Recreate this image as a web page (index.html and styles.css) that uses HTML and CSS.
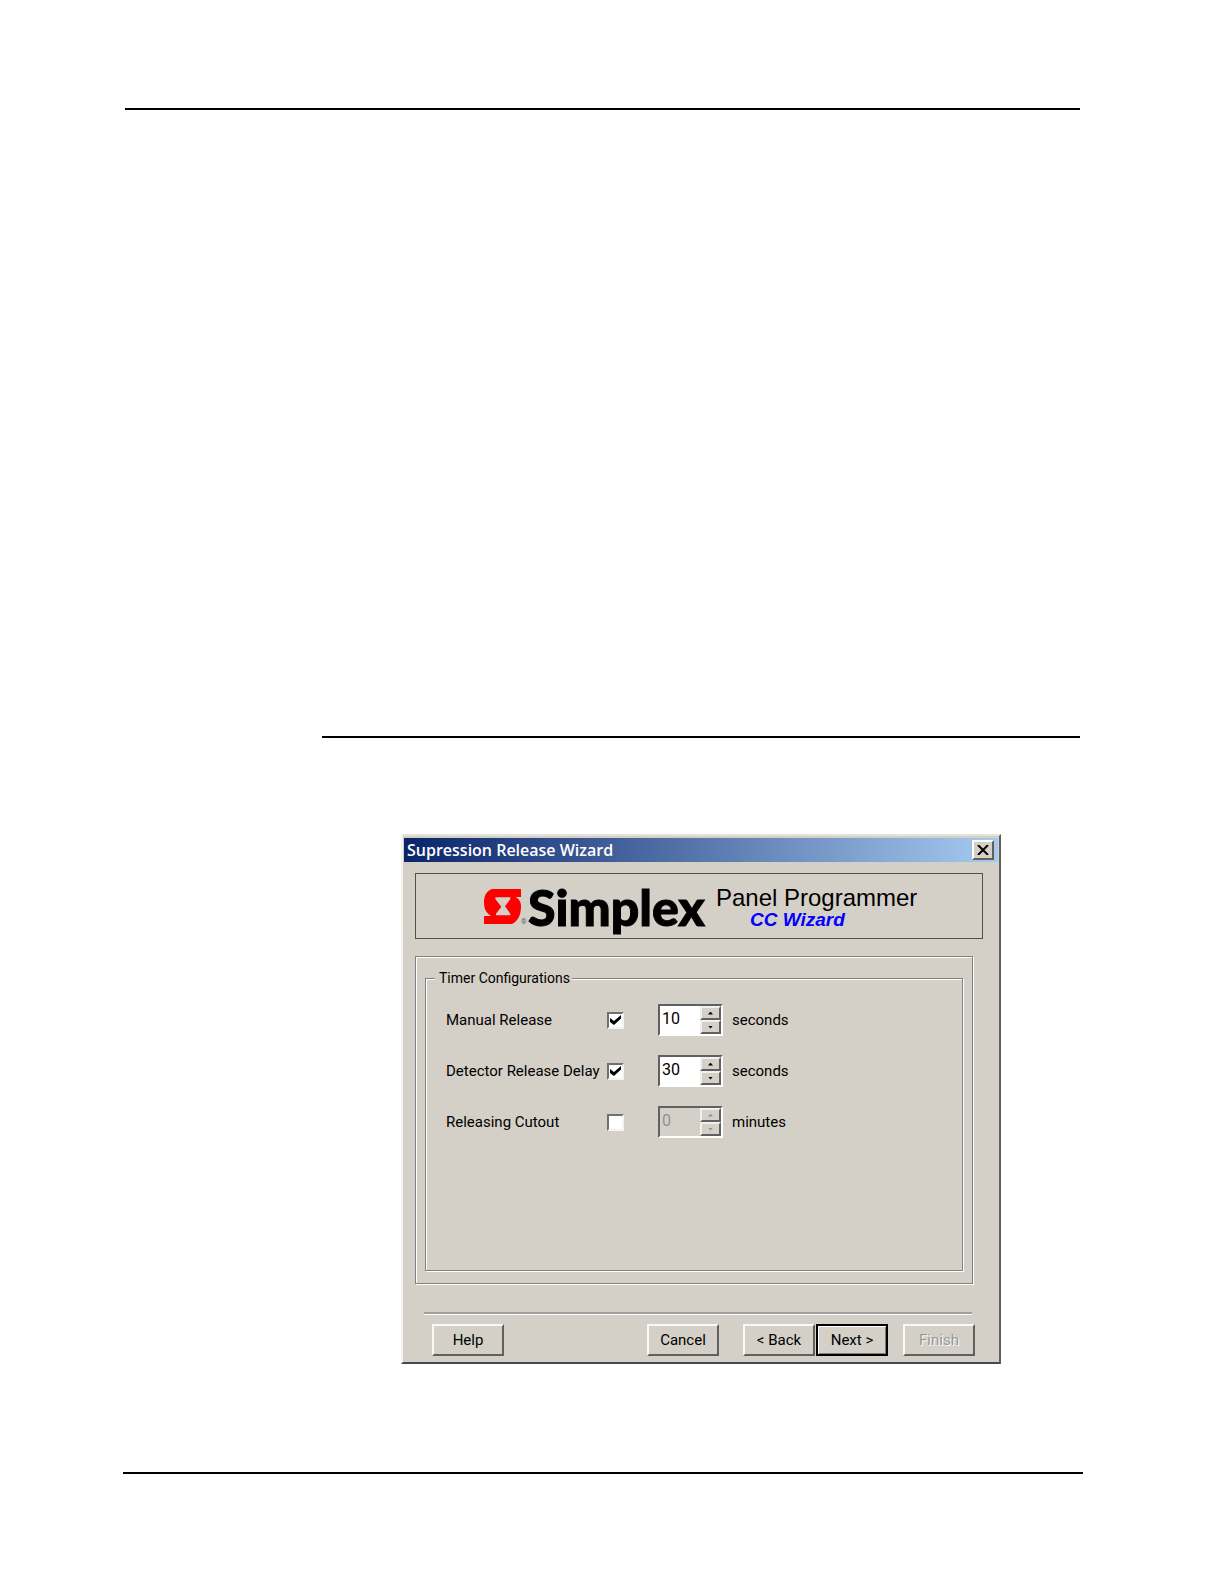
FILE: index.html
```html
<!DOCTYPE html>
<html lang="en">
<head>
<meta charset="utf-8">
<title>Supression Release Wizard</title>
<link rel="stylesheet" href="styles.css">
</head>
<body>
<main class="page">
  <hr class="rule">
  <section class="section">
    <hr class="rule">
    <form class="dialog" role="dialog" aria-labelledby="dialog-title">
      <header class="titlebar">
        <h1 class="title" id="dialog-title">Supression Release Wizard</h1>
        <button class="close" type="button" aria-label="Close">
          <svg width="12" height="10" viewBox="0 0 12 10"><path d="M1 0L11 10M11 0L1 10" stroke="#000" stroke-width="2"/></svg>
        </button>
      </header>
      <div class="banner">
        <svg class="mark" width="37" height="35" viewBox="0 0 111 105" aria-hidden="true">
          <path fill="#f00" fill-rule="evenodd" d="M25 0H111V24H94C106 30 111 39 111 52C111 77 103 96 84 105H0V81H22C6 72 0 58 0 41C0 20 7 6 25 0ZM34 25V30L52 53L36 74V79H79V74L63 52L79 30V25Z"/>
        </svg>
        <span class="registered">®</span>
        <span class="brand">Simplex</span>
        <div class="product">
          <span class="product-name">Panel Programmer</span>
          <span class="product-sub">CC Wizard</span>
        </div>
      </div>
      <div class="panel">
        <fieldset class="group">
          <legend>Timer Configurations</legend>
          <div class="row">
            <label for="manual-on">Manual Release</label>
            <input class="check" type="checkbox" id="manual-on" checked>
            <div class="spinner">
              <input type="number" id="manual" value="10" aria-label="Manual Release delay">
              <div class="arrows">
                <button type="button" class="up" aria-label="Increase"></button>
                <button type="button" class="down" aria-label="Decrease"></button>
              </div>
            </div>
            <label for="manual">seconds</label>
          </div>
          <div class="row">
            <label for="detector-on">Detector Release Delay</label>
            <input class="check" type="checkbox" id="detector-on" checked>
            <div class="spinner">
              <input type="number" id="detector" value="30" aria-label="Detector Release Delay">
              <div class="arrows">
                <button type="button" class="up" aria-label="Increase"></button>
                <button type="button" class="down" aria-label="Decrease"></button>
              </div>
            </div>
            <label for="detector">seconds</label>
          </div>
          <div class="row">
            <label for="cutout-on">Releasing Cutout</label>
            <input class="check" type="checkbox" id="cutout-on">
            <div class="spinner">
              <input type="number" id="cutout" value="0" aria-label="Releasing Cutout" disabled>
              <div class="arrows">
                <button type="button" class="up" aria-label="Increase" disabled></button>
                <button type="button" class="down" aria-label="Decrease" disabled></button>
              </div>
            </div>
            <label for="cutout">minutes</label>
          </div>
        </fieldset>
      </div>
      <footer class="actions">
        <button class="button help" type="button">Help</button>
        <button class="button cancel" type="button">Cancel</button>
        <button class="button" type="button">&lt; Back</button>
        <button class="button default" type="submit">Next &gt;</button>
        <button class="button finish" type="button" disabled>Finish</button>
      </footer>
    </form>
  </section>
  <hr class="rule bottom">
</main>
</body>
</html>
```
FILE: styles.css
```css
* { box-sizing: border-box; }

body {
  margin: 0;
  background: #fff;
  color: #000;
  font: 15px/20px Roboto, "Liberation Sans", sans-serif;
}

button, input { font: inherit; color: inherit; }

.page { padding: 108px 144px 108px 125px; }

.rule {
  height: 2px;
  margin: 0;
  border: 0;
  background: #000;
}

.rule.bottom { margin: 108px -3px 0 -2px; }

.section { padding: 626px 0 0 197px; }

.dialog {
  max-width: 600px;
  margin: 96px 0 0 79px;
  padding: 2px 1px 6px;
  border: 2px solid;
  border-color: #e4e2dc #606060 #484848 #f4f4f2;
  background: #d4d0c8;
}

.titlebar {
  display: flex;
  align-items: center;
  justify-content: space-between;
  height: 24px;
  padding: 0 4px 0 3px;
  background: linear-gradient(to right, #0a246a, #a6caf0);
}

.title {
  margin: 0;
  color: #fff;
  font: 600 16px/24px "Open Sans", "Noto Sans", sans-serif;
}

.close {
  display: grid;
  place-items: center;
  width: 22px;
  height: 20px;
  padding: 0;
  border: 2px solid;
  border-color: #fff #606060 #606060 #fff;
  background: #d4d0c8;
}

.banner {
  display: flex;
  align-items: flex-start;
  height: 66px;
  margin: 11px 15px 0 11px;
  padding: 15px 0 0 68px;
  border: 1px solid #505048;
}

.registered {
  width: 7px;
  padding-top: 28px;
  color: #606060;
  font-size: 7px;
  line-height: 10px;
}

.brand {
  font: 900 50px/36px Lato, sans-serif;
  -webkit-text-stroke: 1px #000;
}

.product {
  display: flex;
  flex-direction: column;
  margin: -3px 0 0 11px;
  font-family: "Liberation Sans", sans-serif;
}

.product-name { font-size: 24px; line-height: 24px; }

.product-sub {
  padding-left: 34px;
  color: #00f;
  font-size: 19px;
  font-style: italic;
  font-weight: bold;
  line-height: 20px;
}

.panel {
  margin: 17px 25px 0 11px;
  padding: 11px 9px 12px;
  border: 1px solid #808080;
  box-shadow: 1px 1px 0 #fff, inset 1px 1px 0 #fff;
}

.group {
  min-height: 303px;
  margin: 0;
  padding: 16px 20px 0;
  border: 1px solid #808080;
  box-shadow: 1px 1px 0 #fff, inset 1px 1px 0 #fff;
}

.group legend {
  margin-left: -11px;
  padding: 0 2px 0 4px;
  background: #d4d0c8;
  font-size: 14px;
}

.row {
  display: grid;
  grid-template-columns: 161px 51px 65px 1fr;
  align-items: center;
  height: 32px;
  margin-bottom: 19px;
}

.row > label:last-child { padding-left: 9px; }

.check {
  appearance: none;
  display: grid;
  place-items: center;
  width: 17px;
  height: 17px;
  margin: 0;
  border: 2px solid;
  border-color: #707070 #f4f4f2 #f4f4f2 #707070;
  background: #fff;
}

.check:checked::before {
  content: "";
  width: 11px;
  height: 10px;
  background: #000;
  clip-path: polygon(0 30%, 36% 60%, 100% 0, 100% 35%, 36% 100%, 0 70%);
}

.spinner {
  display: flex;
  height: 32px;
  border: 2px solid;
  border-color: #606060 #fff #fff #606060;
  background: #fff;
}

.spinner input {
  appearance: textfield;
  flex: 1;
  min-width: 0;
  height: 24px;
  padding: 0 0 0 2px;
  border: 0;
  background: transparent;
  font-size: 16px;
}

.spinner input::-webkit-inner-spin-button { appearance: none; }

.spinner:has(:disabled) { background: #d4d0c8; color: #909090; }

.arrows { display: flex; flex-direction: column; width: 21px; }

.arrows button {
  display: grid;
  place-items: center;
  flex: 1;
  padding: 0;
  border: 2px solid;
  border-color: #f0f0ec #606060 #606060 #f0f0ec;
  background: #d4d0c8;
}

.arrows button::before {
  content: "";
  width: 5px;
  height: 3px;
  background: #000;
}

.arrows .up::before { clip-path: polygon(50% 0, 100% 100%, 0 100%); }
.arrows .down::before { clip-path: polygon(0 0, 100% 0, 50% 100%); }
.arrows button:disabled::before { background: #909090; }

.actions {
  display: flex;
  margin: 28px 26px 0 20px;
  padding: 10px 0 0 8px;
  border-top: 2px solid #a0a09c;
  box-shadow: inset 0 1px 0 #fff;
}

.button {
  width: 72px;
  height: 32px;
  margin-right: 1px;
  padding: 0;
  border: 2px solid;
  border-color: #f8f8f4 #606060 #606060 #f8f8f4;
  background: #d4d0c8;
}

.help { margin-right: auto; }
.cancel { margin-right: 24px; }

.default {
  border-color: #000;
  box-shadow: inset 1px 1px 0 #fff, inset -1px -1px 0 #808080;
}

.finish {
  margin: 0 -3px 0 14px;
  color: #989898;
  text-shadow: 1px 1px 0 #fff;
}
```
